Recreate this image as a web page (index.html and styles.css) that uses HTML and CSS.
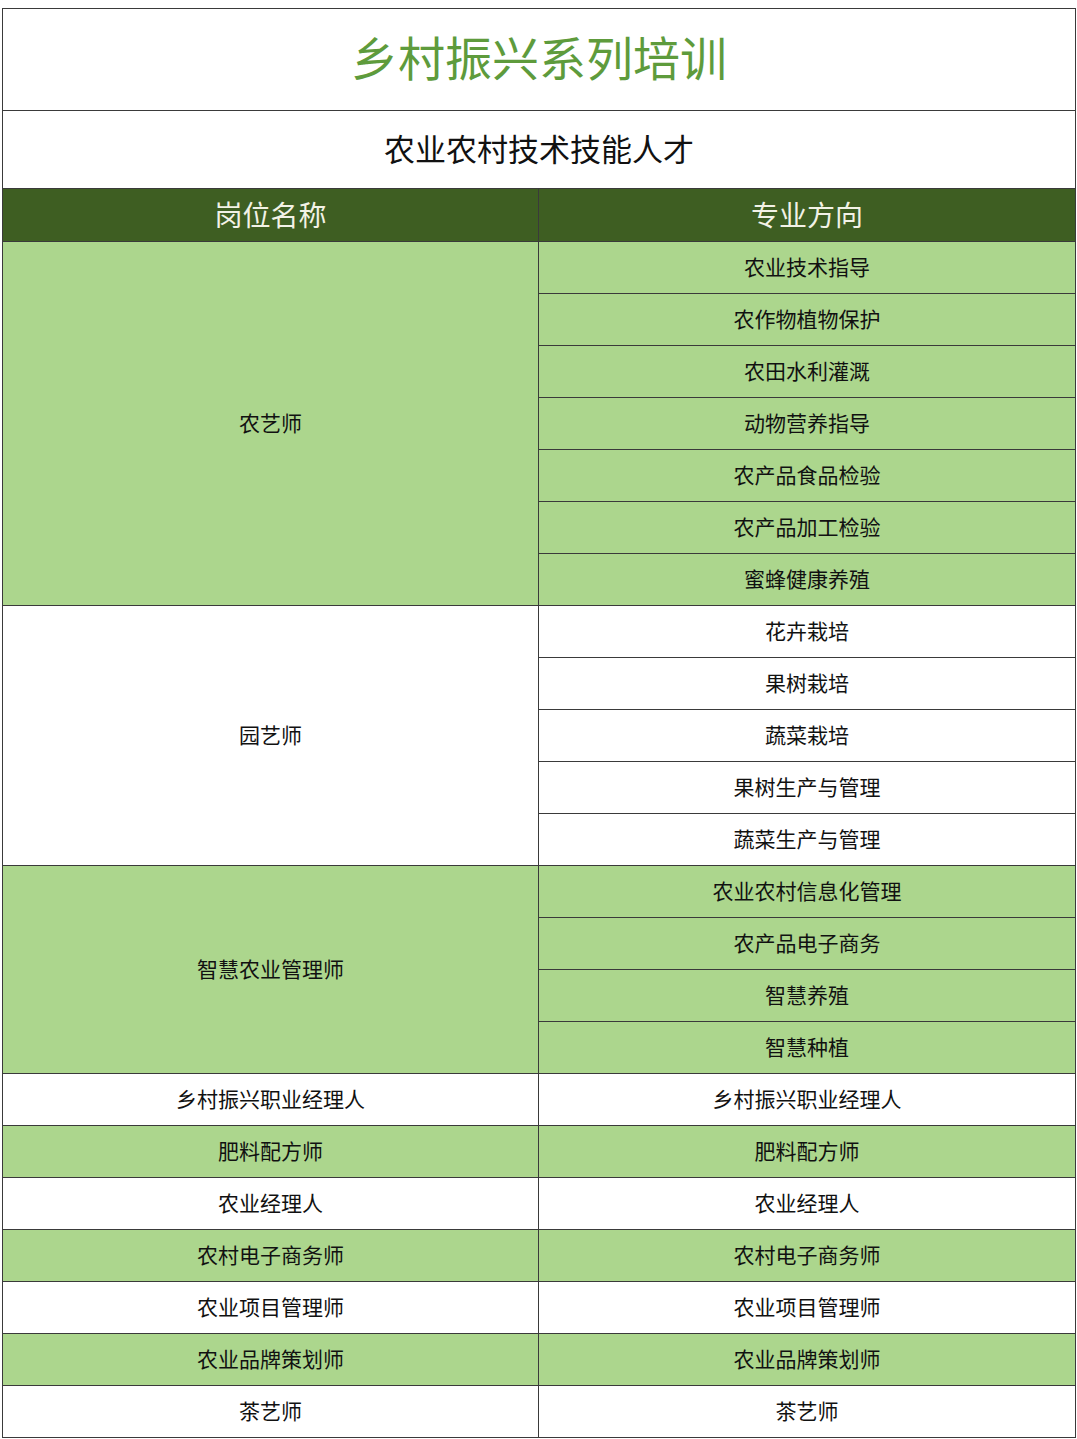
FILE: index.html
```html
<!DOCTYPE html>
<html lang="zh-CN">
<head>
<meta charset="utf-8">
<title>乡村振兴系列培训</title>
<link rel="stylesheet" href="styles.css">
</head>
<body>
<table class="sheet">
  <colgroup><col class="c1"><col class="c2"></colgroup>
  <tr class="r-title"><td colspan="2" class="title">乡村振兴系列培训</td></tr>
  <tr class="r-sub"><td colspan="2" class="sub">农业农村技术技能人才</td></tr>
  <tr class="r-head"><th>岗位名称</th><th>专业方向</th></tr>

  <tr class="g"><td rowspan="7">农艺师</td><td>农业技术指导</td></tr>
  <tr class="g"><td>农作物植物保护</td></tr>
  <tr class="g"><td>农田水利灌溉</td></tr>
  <tr class="g"><td>动物营养指导</td></tr>
  <tr class="g"><td>农产品食品检验</td></tr>
  <tr class="g"><td>农产品加工检验</td></tr>
  <tr class="g"><td>蜜蜂健康养殖</td></tr>

  <tr class="w"><td rowspan="5">园艺师</td><td>花卉栽培</td></tr>
  <tr class="w"><td>果树栽培</td></tr>
  <tr class="w"><td>蔬菜栽培</td></tr>
  <tr class="w"><td>果树生产与管理</td></tr>
  <tr class="w"><td>蔬菜生产与管理</td></tr>

  <tr class="g"><td rowspan="4">智慧农业管理师</td><td>农业农村信息化管理</td></tr>
  <tr class="g"><td>农产品电子商务</td></tr>
  <tr class="g"><td>智慧养殖</td></tr>
  <tr class="g"><td>智慧种植</td></tr>

  <tr class="w"><td>乡村振兴职业经理人</td><td>乡村振兴职业经理人</td></tr>
  <tr class="g"><td>肥料配方师</td><td>肥料配方师</td></tr>
  <tr class="w"><td>农业经理人</td><td>农业经理人</td></tr>
  <tr class="g"><td>农村电子商务师</td><td>农村电子商务师</td></tr>
  <tr class="w"><td>农业项目管理师</td><td>农业项目管理师</td></tr>
  <tr class="g"><td>农业品牌策划师</td><td>农业品牌策划师</td></tr>
  <tr class="w"><td>茶艺师</td><td>茶艺师</td></tr>
</table>
</body>
</html>
```

FILE: styles.css
```css
html, body {
  margin: 0;
  padding: 0;
  background: #ffffff;
}
body {
  font-family: "Noto Sans CJK SC", "Noto Sans", sans-serif;
  color: #111;
}
.sheet {
  border-collapse: collapse;
  margin: 8px 0 0 2px;
  width: 1073px;
  table-layout: fixed;
}
.c1 { width: 536px; }
.c2 { width: 537px; }
.sheet td, .sheet th {
  border: 1px solid #3a3a3a;
  text-align: center;
  vertical-align: middle;
  padding: 0 0 3px 0;
  font-weight: 400;
}
.sheet .title {
  height: 92px;
  padding-bottom: 9px;
  font-size: 47px;
  font-weight: 400;
  color: #5e9b3c;
  line-height: 1;
}
.sheet .sub {
  height: 73px;
  padding-bottom: 4px;
  font-size: 31px;
  color: #111;
  line-height: 1;
}
.r-head th {
  height: 49px;
  background: #3e5e22;
  color: #f2f2e6;
  font-size: 28px;
  line-height: 1;
}
.g td, .w td {
  height: 48px;
  font-size: 21px;
  line-height: 1;
}
.g td { background: #acd68d; }
.w td { background: #ffffff; }
```
